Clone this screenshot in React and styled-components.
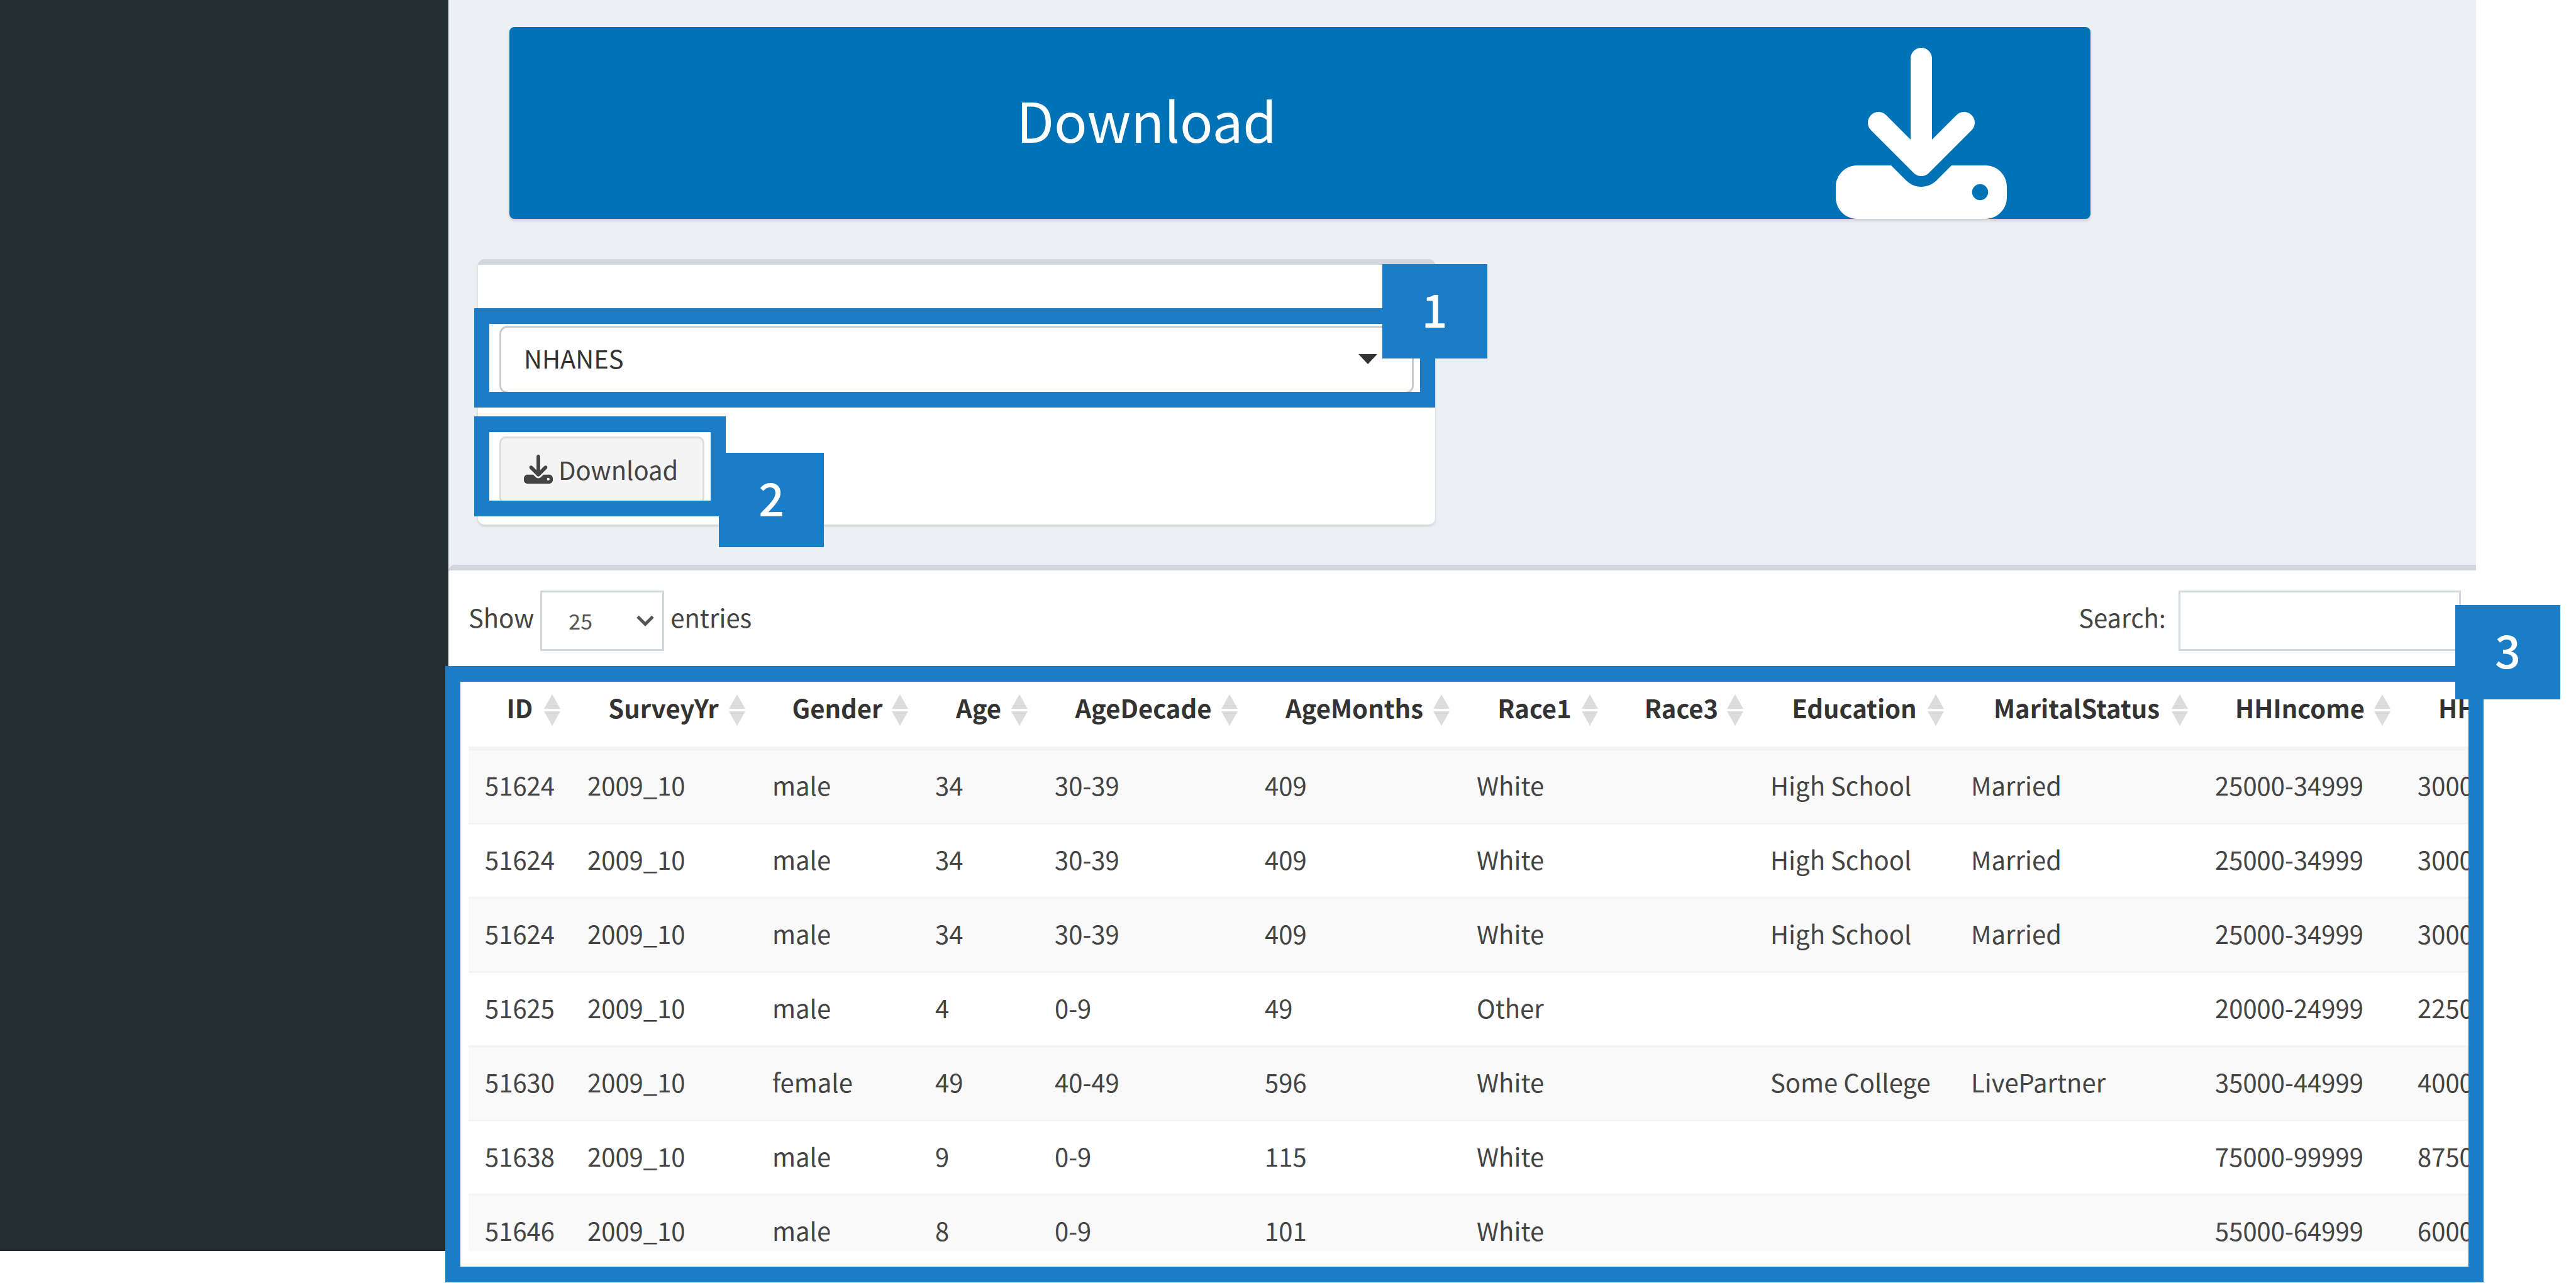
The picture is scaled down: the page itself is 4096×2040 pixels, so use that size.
import React from "react";
import styled, { createGlobalStyle } from "styled-components";

const font = `"Noto Sans CJK SC", "Noto Sans", sans-serif`;
const accent = "#1a7dc6";
const line = "#d2d6de";

const GlobalStyle = createGlobalStyle`
  *, *::before, *::after { box-sizing: border-box; }
  body { margin: 0; background: #fff; color: #444; font: 400 40px/64px ${font}; }
  h1 { margin: 0; }
  input, select, button { font-family: inherit; margin: 0; }
`;

const Page = styled.div`
  height: 100vh;
  padding: 0 159px 51px 0;
  overflow: hidden;
`;

const Shell = styled.div`
  display: flex;
  height: 100%;
`;

const Sidebar = styled.aside`
  flex: 0 0 713px;
  background: #222d32;
`;

const Content = styled.main`
  flex: 1;
  min-width: 0;
  display: flex;
  flex-direction: column;
  background: #ecf0f5;
`;

const Hero = styled.section`
  padding: 43px 0 64px 47px;
`;

const Banner = styled.header`
  display: flex;
  align-items: center;
  width: calc(80% - 28px);
  height: 305px;
  margin: 0 0 64px 50px;
  border-radius: 8px;
  background: #0073b7;
  color: #fff;
  box-shadow: 0 3px 4px rgba(0, 0, 0, 0.14);
`;

const BannerTitle = styled.h1`
  flex: 1;
  padding-bottom: 14px;
  font-size: 87px;
  font-weight: 400;
  line-height: 128px;
  text-align: center;
`;

const BannerIcon = styled.div`
  display: flex;
  align-self: flex-end;
  padding: 0 133px 0 82px;
`;

const Panel = styled.div`
  width: calc(50% - 67px);
  padding: 97px 34px 32px;
  border-top: 9px solid ${line};
  border-radius: 10px;
  background: #fff;
  box-shadow: 0 3px 4px rgba(0, 0, 0, 0.12);
`;

const Callout = styled.div`
  position: relative;
  width: ${(p) => (p.$fit ? "fit-content" : "auto")};
  margin-top: ${(p) => p.$gap || 0}px;
`;

const Frame = styled.div`
  position: absolute;
  inset: ${(p) => p.$inset};
  border: solid ${accent};
  border-width: 25px 24px;
  pointer-events: none;
`;

const Badge = styled.div`
  position: absolute;
  top: ${(p) => p.$top}px;
  right: ${(p) => p.$right}px;
  display: flex;
  align-items: center;
  justify-content: center;
  width: 167px;
  height: 150px;
  padding-bottom: 10px;
  background: ${accent};
  color: #fff;
  font-size: 72px;
  font-weight: 500;
  line-height: 104px;
`;

const Picker = styled.div`
  position: relative;
  svg {
    position: absolute;
    right: ${(p) => p.$iconRight}px;
    top: ${(p) => p.$iconTop}px;
    pointer-events: none;
  }
`;

const DatasetSelect = styled.select`
  display: block;
  appearance: none;
  width: 100%;
  height: 108px;
  padding: 0 36px 6px;
  border: 3px solid #ccc;
  border-radius: 13px;
  background: #fff;
  color: #333;
  font-size: 40px;
`;

const DownloadButton = styled.button`
  display: flex;
  align-items: center;
  gap: 9px;
  height: 108px;
  padding: 0 39px 4px 36px;
  border: 3px solid #ddd;
  border-radius: 10px;
  background: #f4f4f4;
  color: #444;
  font-size: 40px;
  line-height: 64px;
`;

const DataCard = styled.section`
  flex: 1;
  min-height: 0;
  display: flex;
  flex-direction: column;
  border-top: 9px solid ${line};
  border-top-left-radius: 10px;
  background: #fff;
`;

const Toolbar = styled.div`
  display: flex;
  justify-content: space-between;
  padding: 32px 24px 49px 32px;
`;

const Field = styled.div`
  display: flex;
  align-items: center;
  gap: ${(p) => p.$gap}px;
`;

const FieldLabel = styled.label`
  padding-bottom: 12px;
`;

const LengthSelect = styled.select`
  display: block;
  appearance: none;
  width: 197px;
  height: 96px;
  padding: 0 42px 2px;
  border: 3px solid ${line};
  border-radius: 0;
  background: #fff;
  color: #555;
  font-size: 34px;
`;

const SearchInput = styled.input`
  width: 449px;
  height: 96px;
  padding: 0 32px;
  border: 3px solid ${line};
  border-radius: 0;
  background: #fff;
  color: #555;
  font-size: 34px;
`;

const TableArea = styled(Callout)`
  flex: 1;
  min-height: 0;
`;

const TableClip = styled.div`
  height: 100%;
  padding-left: 32px;
  overflow: hidden;
`;

const Table = styled.table`
  width: 3469px;
  table-layout: fixed;
  border-collapse: separate;
  border-spacing: 0;
`;

const HeadCell = styled.th`
  position: relative;
  padding: 9px 0 30px;
  border-bottom: 6px solid #f4f4f4;
  color: #333;
  font-weight: 700;
  text-align: center;
  white-space: nowrap;
  svg {
    position: absolute;
    right: 17px;
    top: 20px;
  }
`;

const Row = styled.tr`
  &:nth-child(odd) td { background: #f9f9f9; }
  &:first-child td { border-top: 0; }
`;

const Cell = styled.td`
  padding: 23px 0 28px 26px;
  border-top: 3px solid #f4f4f4;
  white-space: nowrap;
`;

const DownloadIcon = ({ size }) => (
  <svg width={size} height={size} viewBox="0 0 512 512" fill="currentColor" aria-hidden="true">
    <path d="M288 32c0-17.7-14.3-32-32-32s-32 14.3-32 32V274.7l-73.4-73.4c-12.5-12.5-32.8-12.5-45.3 0s-12.5 32.8 0 45.3l128 128c12.5 12.5 32.8 12.5 45.3 0l128-128c12.5-12.5 12.5-32.8 0-45.3s-32.8-12.5-45.3 0L288 274.7V32zM64 352c-35.3 0-64 28.7-64 64v32c0 35.3 28.7 64 64 64H448c35.3 0 64-28.7 64-64V416c0-35.3-28.7-64-64-64H346.5l-45.3 45.3c-25 25-65.5 25-90.5 0L165.5 352H64zm368 56a24 24 0 1 1 0 48 24 24 0 1 1 0-48z" />
  </svg>
);

const CaretIcon = () => (
  <svg width="30" height="16" viewBox="0 0 30 16" aria-hidden="true">
    <path d="M0 0H30L15 16Z" fill="#333" />
  </svg>
);

const ChevronIcon = () => (
  <svg width="28" height="18" viewBox="0 0 28 18" aria-hidden="true">
    <path d="M2 2.5L14 14.5L26 2.5" fill="none" stroke="#555" strokeWidth="5" />
  </svg>
);

const SortIcon = () => (
  <svg width="26" height="50" viewBox="0 0 26 50" fill="#dcdcdc" aria-hidden="true">
    <path d="M13 0L26 23H0ZM0 27H26L13 50Z" />
  </svg>
);

const columns = [
  ["ID", 163],
  ["SurveyYr", 294],
  ["Gender", 259],
  ["Age", 190],
  ["AgeDecade", 334],
  ["AgeMonths", 337],
  ["Race1", 236],
  ["Race3", 231],
  ["Education", 319],
  ["MaritalStatus", 388],
  ["HHIncome", 322],
  ["HHIncomeMid", 396],
];

const rows = [
  ["51624", "2009_10", "male", "34", "30-39", "409", "White", "", "High School", "Married", "25000-34999", "30000"],
  ["51624", "2009_10", "male", "34", "30-39", "409", "White", "", "High School", "Married", "25000-34999", "30000"],
  ["51624", "2009_10", "male", "34", "30-39", "409", "White", "", "High School", "Married", "25000-34999", "30000"],
  ["51625", "2009_10", "male", "4", "0-9", "49", "Other", "", "", "", "20000-24999", "22500"],
  ["51630", "2009_10", "female", "49", "40-49", "596", "White", "", "Some College", "LivePartner", "35000-44999", "40000"],
  ["51638", "2009_10", "male", "9", "0-9", "115", "White", "", "", "", "75000-99999", "87500"],
  ["51646", "2009_10", "male", "8", "0-9", "101", "White", "", "", "", "55000-64999", "60000"],
];

export default function App() {
  return (
    <Page>
      <GlobalStyle />
      <Shell>
        <Sidebar />
        <Content>
          <Hero>
            <Banner>
              <BannerTitle>Download</BannerTitle>
              <BannerIcon>
                <DownloadIcon size={272} />
              </BannerIcon>
            </Banner>
            <Panel>
              <Callout>
                <Picker $iconRight={58} $iconTop={45}>
                  <DatasetSelect aria-label="Dataset" defaultValue="NHANES">
                    <option>NHANES</option>
                  </DatasetSelect>
                  <CaretIcon />
                </Picker>
                <Frame $inset="-28px -34px -22px -40px" />
                <Badge $top={-98} $right={-117}>1</Badge>
              </Callout>
              <Callout $fit $gap={68}>
                <DownloadButton type="button">
                  <DownloadIcon size={46} />
                  Download
                </DownloadButton>
                <Frame $inset="-32px -34px -19px -40px" />
                <Badge $top={26} $right={-190}>2</Badge>
              </Callout>
            </Panel>
          </Hero>
          <DataCard>
            <Toolbar>
              <Field $gap={10}>
                <FieldLabel htmlFor="length">Show</FieldLabel>
                <Picker $iconRight={16} $iconTop={39}>
                  <LengthSelect id="length" defaultValue="25">
                    <option>25</option>
                  </LengthSelect>
                  <ChevronIcon />
                </Picker>
                <FieldLabel htmlFor="length">entries</FieldLabel>
              </Field>
              <Field $gap={20}>
                <FieldLabel htmlFor="search">Search:</FieldLabel>
                <SearchInput id="search" type="text" />
              </Field>
            </Toolbar>
            <TableArea>
              <TableClip>
                <Table>
                  <colgroup>
                    {columns.map(([name, width]) => (
                      <col key={name} style={{ width }} />
                    ))}
                  </colgroup>
                  <thead>
                    <tr>
                      {columns.map(([name]) => (
                        <HeadCell key={name} scope="col">
                          {name}
                          <SortIcon />
                        </HeadCell>
                      ))}
                    </tr>
                  </thead>
                  <tbody>
                    {rows.map((row, r) => (
                      <Row key={r}>
                        {row.map((value, c) => (
                          <Cell key={c}>{value}</Cell>
                        ))}
                      </Row>
                    ))}
                  </tbody>
                </Table>
              </TableClip>
              <Frame $inset="-25px -12px -50px -5px" />
              <Badge $top={-122} $right={-134}>3</Badge>
            </TableArea>
          </DataCard>
        </Content>
      </Shell>
    </Page>
  );
}
